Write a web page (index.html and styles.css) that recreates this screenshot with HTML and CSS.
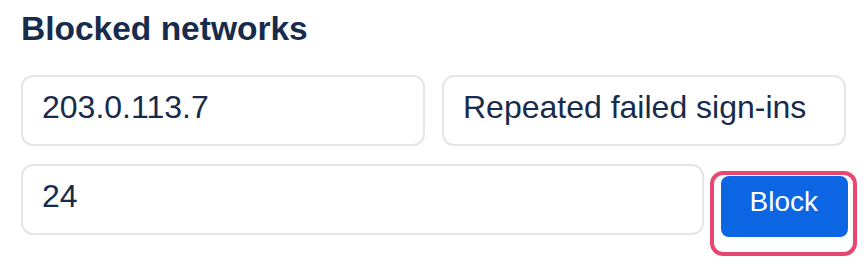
FILE: index.html
```html
<!DOCTYPE html>
<html lang="en">
<head>
   <meta charset="utf-8">
   <meta name="viewport" content="width=device-width, initial-scale=1">
   <title>Blocked networks</title>
   <link rel="stylesheet" href="styles.css">
</head>
<body>
    <div id="blocked_networks">
        <h2 class="section_title">Blocked networks</h2>
        <div class="row_pair">
            <input class="field" type="text" value="203.0.113.7">
            <input class="field" type="text" value="Repeated failed sign-ins">
        </div>
        <div class="row_action">
            <input class="field" type="text" value="24">
            <div class="focus_ring">
                <button id="block">Block</button>
            </div>
        </div>
    </div>
</body>
</html>
```

FILE: styles.css
```css
body {
    margin: 0;
    background-color: #ffffff;
    font-family: "Liberation Sans", Arial, sans-serif;
}

#blocked_networks {
    padding: 11px 22px 0 21px;
}

.section_title {
    margin: 0 0 28px 0;
    font-size: 33.5px;
    line-height: 36px;
    font-weight: bold;
    color: #172b4d;
}

.row_pair {
    display: grid;
    grid-template-columns: 1fr 1fr;
    gap: 17px;
}

.row_action {
    display: flex;
    align-items: flex-start;
    gap: 6px;
    margin-top: 18px;
    margin-right: -11px;
}

.field {
    box-sizing: border-box;
    width: 100%;
    min-width: 0;
    margin: 0;
    padding: 13px 19px 19px 19px;
    border: 2px solid #e4e5eb;
    border-radius: 12px;
    background: #ffffff;
    font-family: "Liberation Sans", Arial, sans-serif;
    font-size: 32px;
    line-height: 35px;
    color: #172b4d;
    outline: none;
}

.row_action .field {
    flex: 1;
}

.focus_ring {
    flex: none;
    margin-top: 7px;
    padding: 1px 5px 15px 7px;
    border: 4px solid #e94670;
    border-radius: 13px;
}

#block {
    display: block;
    margin: 0;
    padding: 10px 30px 20px 29px;
    border: none;
    border-radius: 8px;
    background-color: #0c66e4;
    color: #ffffff;
    font-family: "Liberation Sans", Arial, sans-serif;
    font-size: 28px;
    line-height: 31px;
    cursor: pointer;
}
```
